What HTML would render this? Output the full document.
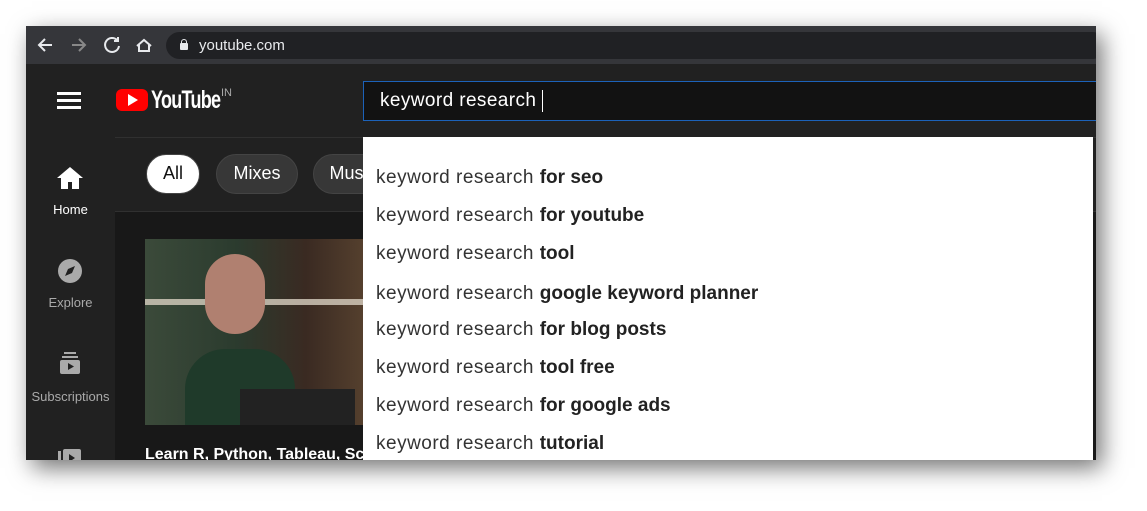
<!DOCTYPE html>
<html><head><style>
body{margin:0;width:1147px;height:511px;background:#fff;overflow:hidden;font-family:"Liberation Sans",sans-serif;position:relative}
.win{position:absolute;left:26px;top:26px;width:1070px;height:434px;background:#181818;overflow:hidden;box-shadow:6px 8px 22px rgba(0,0,0,.55)}
.tb{position:absolute;left:0;top:0;width:1070px;height:38px;background:#35363a}
.url{position:absolute;left:140px;top:6px;width:940px;height:27px;border-radius:14px;background:#202124;color:#e8eaed;font-size:15px;line-height:27px}
.hdr{position:absolute;left:0;top:38px;width:1070px;height:73px;background:#212121}
.side{position:absolute;left:0;top:111px;width:89px;height:330px;background:#212121;color:#aaa;font-size:13px;text-align:center}
.chips{position:absolute;left:89px;top:111px;width:990px;height:73px;background:#212121;border-top:1px solid #303030;border-bottom:1px solid #303030}
.chip{position:absolute;top:16px;height:40px;border-radius:20px;background:#373737;color:#fff;font-size:18px;line-height:36px;text-align:center;border:1px solid #444;box-sizing:border-box}
.search{position:absolute;left:337px;top:55px;width:740px;height:40px;box-sizing:border-box;border:1px solid #1c62b9;background:#121212;color:#fff;font-size:19px;line-height:38px;padding-left:16px;letter-spacing:.4px}
.dd{position:absolute;left:337px;top:111px;width:730px;height:330px;background:#fff}
.s{position:absolute;left:13px;font-size:19px;color:#333;white-space:nowrap;letter-spacing:.5px}
.s b{color:#222;letter-spacing:0}
.thumb{position:absolute;left:119px;top:213px;width:230px;height:186px;background:linear-gradient(90deg,#3b4a3a 0%,#2b3b2e 40%,#3a2a22 70%,#5a4430 100%)}
</style></head><body>
<div class="win">
 <div class="tb">
  <svg width="120" height="38" style="position:absolute;left:8px;top:0" fill="none" stroke="#e8eaed" stroke-width="2">
   <path d="M18 19H6M11 13l-6 6 6 6"/>
   <path d="M38 19h12M45 13l6 6-6 6" stroke="#888"/>
   <path d="M83 14a7 7 0 1 0 2 6M84 11v4h-4"/>
   <path d="M103 20l7-6 7 6M105 18v7h10v-7"/>
  </svg>
  <div class="url"><span style="position:absolute;left:14px;top:11px;width:8px;height:7px;background:#e8eaed;border-radius:1px"></span><span style="position:absolute;left:15px;top:7px;width:4px;height:5px;border:1.5px solid #e8eaed;border-bottom:none;border-radius:3px 3px 0 0"></span><span style="position:absolute;left:33px">youtube.com</span></div>
 </div>
 <div class="hdr">
  <div style="position:absolute;left:31px;top:28px;width:24px;height:3px;background:#fff;box-shadow:0 7px 0 #fff,0 14px 0 #fff"></div>
  <div style="position:absolute;left:90px;top:25px;width:32px;height:22px;background:#f00;border-radius:6px"></div>
  <div style="position:absolute;left:102px;top:30px;width:0;height:0;border-left:10px solid #fff;border-top:6px solid transparent;border-bottom:6px solid transparent"></div>
  <div style="position:absolute;left:125px;top:22px;color:#fff;font-size:25px;font-weight:bold;letter-spacing:-1px;transform:scaleX(.72);transform-origin:left">YouTube</div>
  <div style="position:absolute;left:195px;top:23px;color:#aaa;font-size:11px">IN</div>
 </div>
 <div class="search">keyword research <span style="display:inline-block;width:1px;height:22px;background:#fff;vertical-align:middle"></span></div>
 <div class="chips">
  <div class="chip" style="left:31px;width:54px;background:#fff;color:#111">All</div>
  <div class="chip" style="left:101px;width:82px">Mixes</div>
  <div class="chip" style="left:198px;width:80px">Music</div>
 </div>
 <div class="side">
  <svg width="28" height="26" style="position:absolute;left:30px;top:28px"><path d="M14 2L1 13h4v11h7v-7h4v7h7V13h4z" fill="#fff"/></svg>
  <div style="position:absolute;left:0;width:89px;top:65px;color:#fff">Home</div>
  <svg width="28" height="28" style="position:absolute;left:30px;top:120px"><circle cx="14" cy="14" r="12" fill="#aaa"/><path d="M19 9l-7 3-3 7 7-3z" fill="#212121"/></svg>
  <div style="position:absolute;left:0;width:89px;top:158px">Explore</div>
  <svg width="28" height="28" style="position:absolute;left:30px;top:214px"><rect x="8" y="1" width="12" height="2" fill="#aaa"/><rect x="6" y="5" width="16" height="2" fill="#aaa"/><rect x="4" y="9" width="20" height="14" rx="2" fill="#aaa"/><path d="M12 12v7l6-3.5z" fill="#212121"/></svg>
  <div style="position:absolute;left:0;width:89px;top:252px">Subscriptions</div>
  <svg width="28" height="28" style="position:absolute;left:30px;top:308px"><rect x="2" y="6" width="3" height="16" fill="#aaa"/><rect x="7" y="4" width="18" height="18" rx="2" fill="#aaa"/><path d="M13 9v8l6-4z" fill="#212121"/></svg>
 </div>
 <div class="thumb">
  <div style="position:absolute;left:0;top:60px;width:230px;height:6px;background:#d8d0c0;opacity:.8"></div>
  <div style="position:absolute;left:40px;top:110px;width:110px;height:76px;background:#1f3a2a;border-radius:40px 40px 0 0"></div>
  <div style="position:absolute;left:60px;top:15px;width:60px;height:80px;background:#b08070;border-radius:30px"></div>
  <div style="position:absolute;left:95px;top:150px;width:115px;height:36px;background:#222"></div>
 </div>
 <div style="position:absolute;left:119px;top:420px;color:#fff;font-size:16px;font-weight:bold;white-space:nowrap">Learn R, Python, Tableau, Sc</div>
 <div class="dd">
  <div class="s" style="top:30px">keyword research <b>for seo</b></div>
  <div class="s" style="top:68px">keyword research <b>for youtube</b></div>
  <div class="s" style="top:106px">keyword research <b>tool</b></div>
  <div class="s" style="top:146px">keyword research <b>google keyword planner</b></div>
  <div class="s" style="top:182px">keyword research <b>for blog posts</b></div>
  <div class="s" style="top:220px">keyword research <b>tool free</b></div>
  <div class="s" style="top:258px">keyword research <b>for google ads</b></div>
  <div class="s" style="top:296px">keyword research <b>tutorial</b></div>
 </div>
</div>
</body></html>
